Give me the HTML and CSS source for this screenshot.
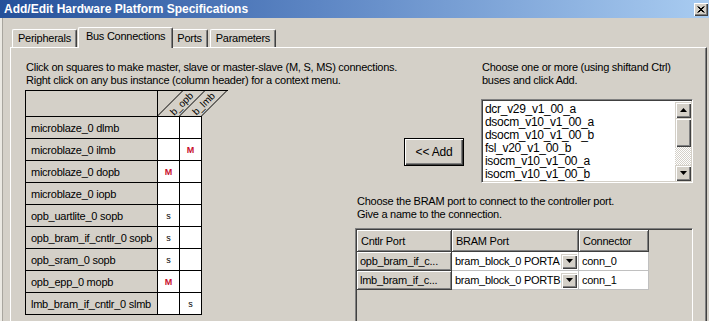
FILE: index.html
```html
<!DOCTYPE html>
<html lang="en">
<head>
  <meta charset="UTF-8">
  <title>Add/Edit Hardware Platform Specifications</title>
  <link rel="stylesheet" href="styles.css">
</head>
<body>
  <div class="window">
    <div class="titlebar">
      <span class="title">Add/Edit Hardware Platform Specifications</span>
      <button class="close-btn">
        <svg width="8" height="7" viewBox="0 0 8 7"><path d="M0.5 0.5L6.5 6.5M1.5 0.5L7.5 6.5M6.5 0.5L0.5 6.5M7.5 0.5L1.5 6.5" stroke="#000" stroke-width="1"/></svg>
      </button>
    </div>

    <div class="tabs">
      <div class="tab">Peripherals</div>
      <div class="tab active">Bus Connections</div>
      <div class="tab">Ports</div>
      <div class="tab">Parameters</div>
    </div>

    <div class="panel">
      <div class="left-col">
        <p class="hint">Click on squares to make master, slave or master-slave (M, S, MS) connections.<br>Right click on any bus instance (column header) for a context menu.</p>

        <svg class="matrix-head" width="204" height="26" viewBox="0 0 204 26">
          <path d="M0 0.5H203M0.5 0V26M132.5 0V26M132.5 26L158.5 0M154.5 26L180.5 0M176.5 26L202.5 0" stroke="#000" stroke-width="1" fill="none"/>
          <text x="157" y="17" transform="rotate(-45 157 14)" text-anchor="middle">b_opb</text>
          <text x="179" y="17" transform="rotate(-45 179 14)" text-anchor="middle">b_lmb</text>
        </svg>
        <table class="matrix">
          <tr><td class="inst">microblaze_0 dlmb</td><td></td><td></td></tr>
          <tr><td class="inst">microblaze_0 ilmb</td><td></td><td class="m">M</td></tr>
          <tr><td class="inst">microblaze_0 dopb</td><td class="m">M</td><td></td></tr>
          <tr><td class="inst">microblaze_0 iopb</td><td></td><td></td></tr>
          <tr><td class="inst">opb_uartlite_0 sopb</td><td class="s">s</td><td></td></tr>
          <tr><td class="inst">opb_bram_if_cntlr_0 sopb</td><td class="s">s</td><td></td></tr>
          <tr><td class="inst">opb_sram_0 sopb</td><td class="s">s</td><td></td></tr>
          <tr><td class="inst">opb_epp_0 mopb</td><td class="m">M</td><td></td></tr>
          <tr><td class="inst">lmb_bram_if_cntlr_0 slmb</td><td></td><td class="s">s</td></tr>
        </table>
      </div>

      <div class="right-col">
        <div class="bus-picker">
          <div class="add-col">
            <button class="add-btn">&lt;&lt; Add</button>
          </div>
          <div class="list-col">
            <p class="hint">Choose one or more (using shiftand Ctrl)<br>buses and click Add.</p>
            <div class="listbox">
              <ul class="list-items">
                <li>dcr_v29_v1_00_a</li>
                <li>dsocm_v10_v1_00_a</li>
                <li>dsocm_v10_v1_00_b</li>
                <li>fsl_v20_v1_00_b</li>
                <li>isocm_v10_v1_00_a</li>
                <li>isocm_v10_v1_00_b</li>
                <li>lmb_v10_v1_00_a</li>
              </ul>
              <div class="scrollbar">
                <div class="sb-btn"><svg width="7" height="4" viewBox="0 0 7 4"><path d="M3.5 0L7 4H0Z" fill="#000"/></svg></div>
                <div class="sb-thumb"></div>
                <div class="sb-track"></div>
                <div class="sb-btn"><svg width="7" height="4" viewBox="0 0 7 4"><path d="M0 0H7L3.5 4Z" fill="#000"/></svg></div>
              </div>
            </div>
          </div>
        </div>

        <p class="hint bram-hint">Choose the BRAM port to connect to the controller port.<br>Give a name to the connection.</p>
        <div class="bram-frame">
          <table class="bram-table">
            <tr>
              <th class="col-cntlr">Cntlr Port</th>
              <th class="col-bram">BRAM Port</th>
              <th class="col-conn">Connector</th>
            </tr>
            <tr>
              <td class="row-head">opb_bram_if_c...</td>
              <td class="combo"><div class="combo-in"><span>bram_block_0 PORTA</span><span class="drop"><svg width="7" height="4" viewBox="0 0 7 4"><path d="M0 0H7L3.5 4Z" fill="#000"/></svg></span></div></td>
              <td>conn_0</td>
            </tr>
            <tr>
              <td class="row-head">lmb_bram_if_c...</td>
              <td class="combo"><div class="combo-in"><span>bram_block_0 PORTB</span><span class="drop"><svg width="7" height="4" viewBox="0 0 7 4"><path d="M0 0H7L3.5 4Z" fill="#000"/></svg></span></div></td>
              <td>conn_1</td>
            </tr>
          </table>
        </div>
      </div>
    </div>
  </div>
</body>
</html>
```

FILE: styles.css
```css
body {
  margin: 0;
  background-color: #d4d0c8;
  font-family: 'Liberation Sans', Arial, sans-serif;
  font-size: 11px;
  letter-spacing: -0.25px;
  color: #000;
}

.window {
  width: 709px;
  height: 321px;
  overflow: hidden;
  box-shadow: inset 2px 0 #ebe9e3, inset 3px 0 #a8a59e;
}

.titlebar {
  height: 18px;
  display: flex;
  align-items: center;
  justify-content: space-between;
  padding: 0 1px 0 4px;
  background: linear-gradient(to right, #24509a, #5d86c4 45%, #a9ccf1);
}

.title {
  color: #fff;
  font-weight: bold;
  font-size: 12px;
  letter-spacing: 0;
}

.close-btn {
  width: 14px;
  height: 13px;
  padding: 0;
  display: flex;
  align-items: center;
  justify-content: center;
  background: #d4d0c8;
  border: none;
  box-shadow: inset 1px 1px #fff, inset -1px -1px #404040, inset -2px -2px #808080;
}

/* tab strip */
.tabs {
  height: 29px;
  display: flex;
  align-items: flex-end;
  padding-left: 12px;
}

.tab {
  height: 17px;
  line-height: 17px;
  padding: 0 5px;
  margin-right: 2px;
  border-top: 1px solid #fff;
  border-left: 1px solid #fff;
  border-right: 1px solid #404040;
  border-radius: 2px 2px 0 0;
  box-shadow: inset -1px 0 #808080;
  position: relative;
}

.tab.active {
  height: 20px;
  line-height: 16px;
  margin: 0 0 -1px -1px;
  padding: 0 7px;
  background: #d4d0c8;
  z-index: 1;
}

.tab.active + .tab {
  margin-left: -2px;
}

.panel {
  margin-left: 10px;
  width: 697px;
  height: 300px;
  border-top: 1px solid #fff;
  border-left: 1px solid #fff;
  border-right: 1px solid #404040;
  box-shadow: inset -1px 0 #808080;
  display: flex;
  padding-left: 14px;
  box-sizing: border-box;
}

.hint {
  margin: 0;
  line-height: 13px;
  white-space: nowrap;
}

.left-col {
  width: 330px;
  flex-shrink: 0;
  padding-top: 13px;
}

.left-col > .hint {
  padding-left: 1px;
}

.matrix-head {
  display: block;
  margin-top: 3px;
  font-size: 10px;
  letter-spacing: 0;
}

.matrix {
  border-collapse: collapse;
}

.matrix td {
  border: 1px solid #000;
  height: 21px;
  padding: 0;
  width: 21px;
  background: #fff;
  text-align: center;
  font-size: 9px;
  letter-spacing: 0;
}

.matrix td.inst {
  width: 126px;
  padding-left: 5px;
  background: #d4d0c8;
  text-align: left;
  font-size: 11px;
  letter-spacing: -0.25px;
  white-space: nowrap;
}

.matrix td.m {
  color: #c8102e;
  font-weight: bold;
}

.right-col {
  flex: 1;
  display: flex;
  flex-direction: column;
  padding-right: 13px;
}

.bus-picker {
  display: flex;
  padding-top: 13px;
}

.add-col {
  width: 126px;
  display: flex;
  justify-content: flex-end;
  padding-right: 17px;
  box-sizing: border-box;
}

.add-btn {
  width: 60px;
  height: 28px;
  margin-top: 77px;
  font-family: inherit;
  font-size: 12px;
  letter-spacing: -0.2px;
  background: #d4d0c8;
  border: 1px solid #000;
  box-shadow: inset 1px 1px #fff, inset -1px -1px #404040, inset -2px -2px #808080;
  padding: 0;
}

.list-col {
  flex: 1;
}

.list-col .hint {
  padding-left: 1px;
}

.listbox {
  margin-top: 12px;
  height: 84px;
  display: flex;
  background: #fff;
  border-top: 1px solid #808080;
  border-left: 1px solid #808080;
  border-right: 1px solid #fff;
  border-bottom: 1px solid #fff;
  box-shadow: inset 1px 1px #404040, inset -1px -1px #d4d0c8;
  box-sizing: border-box;
  padding: 2px 1px 1px 2px;
  overflow: hidden;
}

.list-items {
  flex: 1;
  list-style: none;
  margin: 0;
  padding: 1px 0 0 1px;
  line-height: 13px;
  font-size: 12px;
  letter-spacing: -0.3px;
  overflow: hidden;
}

.scrollbar {
  width: 16px;
  display: flex;
  flex-direction: column;
}

.sb-btn,
.sb-thumb {
  height: 16px;
  display: flex;
  align-items: center;
  justify-content: center;
  background: #d4d0c8;
  box-shadow: inset 1px 1px #d4d0c8, inset 2px 2px #fff, inset -1px -1px #404040, inset -2px -2px #808080;
}

.sb-thumb {
  height: 29px;
}

.sb-track {
  flex: 1;
  background-color: #e8e6e2;
  background-image: repeating-conic-gradient(#fff 0 25%, #d4d0c8 0 50%);
  background-size: 2px 2px;
}

.bram-hint {
  margin-top: 12px;
  padding-left: 2px;
}

.bram-frame {
  margin-top: 7px;
  height: 120px;
  border-top: 1px solid #808080;
  border-left: 1px solid #808080;
  border-right: 1px solid #fff;
  box-shadow: inset 1px 1px #404040;
  padding: 1px 0 0 1px;
}

.bram-table {
  border-collapse: collapse;
}

.bram-table th {
  height: 21px;
  padding: 0 0 0 4px;
  text-align: left;
  font-weight: normal;
  background: #d4d0c8;
  border-right: 1px solid #404040;
  border-bottom: 1px solid #404040;
  box-shadow: inset 1px 1px #fff, inset -1px -1px #808080;
}

.col-cntlr { width: 90px; }
.col-bram { width: 122px; }
.col-conn { width: 65px; }

.bram-table td {
  height: 18px;
  padding: 0 0 0 3px;
  background: #fff;
  border-right: 1px solid #c0c0c0;
  border-bottom: 1px solid #c0c0c0;
  white-space: nowrap;
}

.bram-table td.row-head {
  background: #d4d0c8;
  border-right: 1px solid #404040;
  border-bottom: 1px solid #404040;
  box-shadow: inset 1px 1px #fff, inset -1px -1px #808080;
}

.bram-table td.combo {
  padding-right: 1px;
}

.combo-in {
  display: flex;
  align-items: center;
  justify-content: space-between;
}

.drop {
  width: 16px;
  height: 15px;
  display: flex;
  align-items: center;
  justify-content: center;
  background: #d4d0c8;
  box-shadow: inset 1px 1px #d4d0c8, inset 2px 2px #fff, inset -1px -1px #404040, inset -2px -2px #808080;
}
```
